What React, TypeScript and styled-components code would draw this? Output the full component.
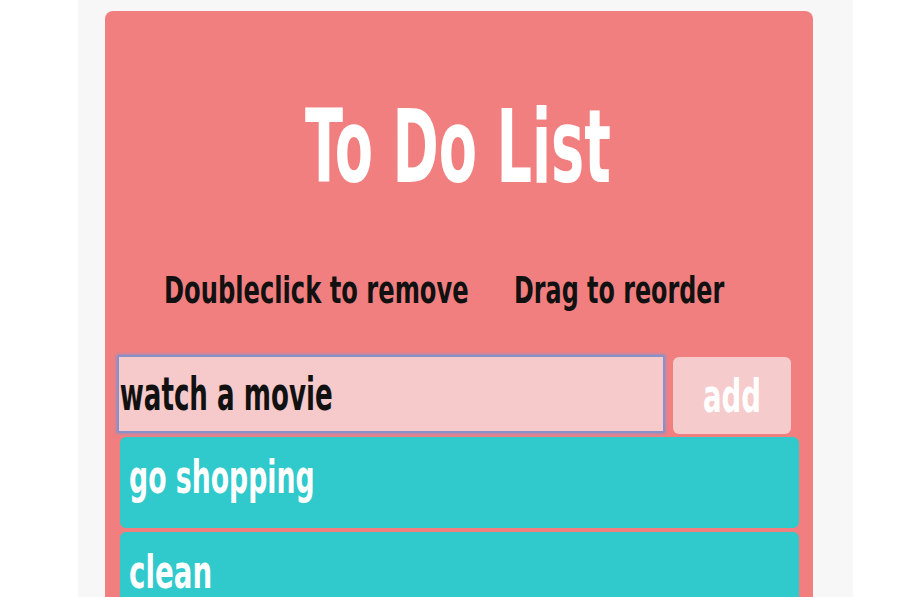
import React, { useLayoutEffect, useRef, useState } from "react";
import styled, { createGlobalStyle } from "styled-components";

const FONT = `"Liberation Sans Narrow", "DejaVu Sans Condensed", "Liberation Sans", sans-serif`;

const GlobalStyle = createGlobalStyle`
  html, body { margin: 0; padding: 0; background: #ffffff; }
  body { font-family: ${FONT}; overflow: hidden; }
  * { box-sizing: border-box; }
`;

const Page = styled.div`
  display: flex;
  padding-left: 78px;
  height: 597px;
  overflow: hidden;
`;

const Panel = styled.div`
  width: 775px;
  background: #f7f7f7;
  padding: 11px 0 0 27px;
`;

const Card = styled.div`
  width: 708px;
  min-height: 640px;
  background: #f27f7f;
  border-radius: 8px;
  padding: 0 14px 0 12px;
`;

const Title = styled.h1`
  margin: 0;
  padding-top: 74px;
  text-align: center;
  font-family: ${FONT};
  font-weight: 700;
  font-size: 102px;
  line-height: 124px;
  color: #ffffff;
`;

const Hints = styled.div`
  display: flex;
  gap: 45px;
  margin-top: 58px;
  padding-left: 47px;
  font-weight: 700;
  font-size: 38px;
  line-height: 46px;
  color: #111111;
`;

const FormRow = styled.form`
  display: flex;
  align-items: flex-start;
  gap: 8px;
  margin: 42px 0 0;
`;

const InputFrame = styled.div`
  width: 548px;
  height: 78px;
  border: 2px solid #8a91c9;
  box-shadow: 0 0 3px 1px rgba(138, 145, 201, 0.8);
  border-radius: 2px;
  background: #f6c9ca;
  overflow: hidden;
`;

const TaskInput = styled.input`
  display: block;
  height: 74px;
  margin: 0;
  padding: 0 0 0 1px;
  border: none;
  outline: none;
  background: transparent;
  color: #111111;
  font-family: ${FONT};
  font-weight: 700;
  font-size: 46px;
  transform-origin: left center;
`;

const AddButton = styled.button`
  width: 118px;
  height: 77px;
  margin-top: 2px;
  padding: 0;
  border: none;
  border-radius: 6px;
  background: #f6cbcb;
  color: #ffffff;
  font-family: ${FONT};
  font-weight: 700;
  font-size: 47px;
  line-height: 56px;
  cursor: pointer;
`;

const ItemList = styled.ul`
  list-style: none;
  margin: 3px 0 0 3px;
  padding: 0;
  display: flex;
  flex-direction: column;
  gap: 4px;
`;

const Item = styled.li`
  height: 91px;
  background: #30c9cc;
  border-radius: 6px;
  padding: 12px 0 0 9px;
  color: #ffffff;
  font-weight: 700;
  font-size: 46px;
  line-height: 56px;
`;

const FitBox = styled.span<{ $w: number }>`
  display: inline-block;
  width: ${(p) => p.$w}px;
  white-space: nowrap;
  vertical-align: top;
  text-align: left;
`;

const FitInner = styled.span`
  display: inline-block;
  transform-origin: left center;
`;

function Fit({ w, children }: { w: number; children: React.ReactNode }) {
  const ref = useRef<HTMLSpanElement>(null);
  const [scale, setScale] = useState(1);
  useLayoutEffect(() => {
    const measure = () => {
      const el = ref.current;
      if (el && el.offsetWidth) setScale(w / el.offsetWidth);
    };
    measure();
    if (document.fonts) document.fonts.ready.then(measure);
  }, [w]);
  return (
    <FitBox $w={w}>
      <FitInner ref={ref} style={{ transform: `scaleX(${scale})` }}>
        {children}
      </FitInner>
    </FitBox>
  );
}

function useTextScale(text: string, target: number, font: string) {
  const [s, setS] = useState(1);
  useLayoutEffect(() => {
    const canvas = document.createElement("canvas");
    const ctx = canvas.getContext("2d");
    if (!ctx) return;
    ctx.font = font;
    const w = ctx.measureText(text).width;
    if (w) setS(target / w);
  }, [text, target, font]);
  return s;
}

const todos = [
  { text: "go shopping", w: 186 },
  { text: "clean", w: 83 },
];

export default function App() {
  const [value, setValue] = useState("watch a movie");
  const s = useTextScale("watch a movie", 213, `700 46px ${FONT}`);
  return (
    <>
      <GlobalStyle />
      <Page>
        <Panel>
          <Card>
            <Title>
              <Fit w={306}>To Do List</Fit>
            </Title>
            <Hints>
              <Fit w={305}>Doubleclick to remove</Fit>
              <Fit w={210}>Drag to reorder</Fit>
            </Hints>
            <FormRow onSubmit={(e) => e.preventDefault()}>
              <InputFrame>
                <TaskInput
                  value={value}
                  onChange={(e) => setValue(e.target.value)}
                  style={{ width: `${544 / s}px`, transform: `scaleX(${s})` }}
                />
              </InputFrame>
              <AddButton type="submit">
                <Fit w={58}>add</Fit>
              </AddButton>
            </FormRow>
            <ItemList>
              {todos.map((t) => (
                <Item key={t.text}>
                  <Fit w={t.w}>{t.text}</Fit>
                </Item>
              ))}
            </ItemList>
          </Card>
        </Panel>
      </Page>
    </>
  );
}
